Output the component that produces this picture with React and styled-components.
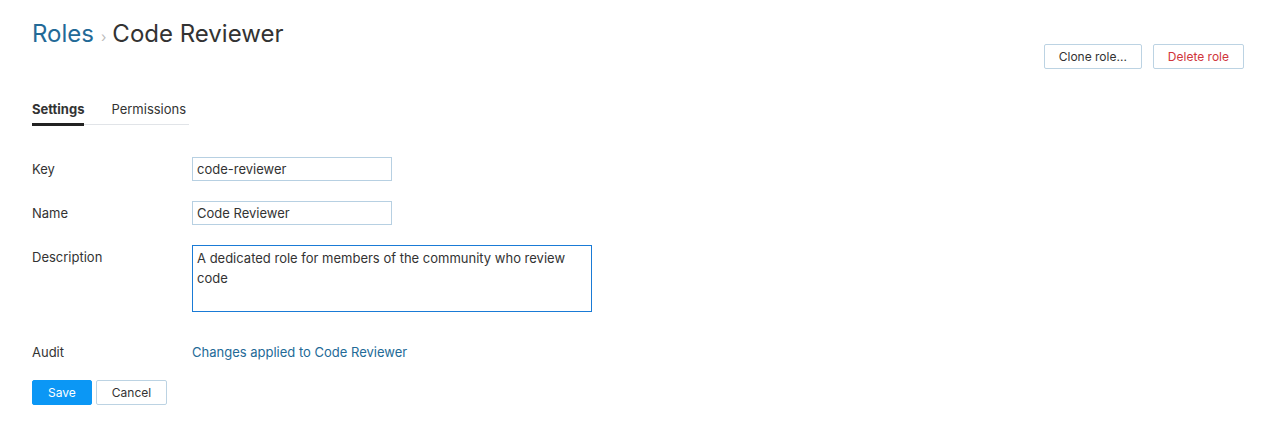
import React from "react";
import styled, { createGlobalStyle } from "styled-components";

const Global = createGlobalStyle`
  body { margin: 0; background: #fff; font-family: Inter, "Noto Sans", sans-serif; color: #333; }
`;

const Page = styled.div`
  padding: 19px 33px 0 32px;
`;

const Header = styled.div`
  display: flex;
  justify-content: space-between;
  align-items: flex-start;
`;

const Title = styled.h1`
  margin: 0;
  font-size: 24px;
  font-weight: 400;
  line-height: 30px;
  color: #333;
  display: flex;
  align-items: baseline;
`;

const Crumb = styled.a`
  color: #236a97;
  text-decoration: none;
`;

const Sep = styled.span`
  color: #bbb;
  font-size: 14px;
  margin: 0 6px 0 7px;
`;

const Actions = styled.div`
  display: flex;
  gap: 11px;
  margin-top: 25px;
`;

const Button = styled.button`
  font-family: inherit;
  font-size: 12px;
  height: 25px;
  padding: 0 ${(p) => p.$pad || 14}px;
  border-radius: 2px;
  cursor: pointer;
  background: ${(p) => (p.$primary ? "#0b97f5" : "#fff")};
  border: 1px solid ${(p) => (p.$primary ? "#0b97f5" : "#bcd3e3")};
  color: ${(p) => (p.$primary ? "#fff" : p.$danger ? "#d0353b" : "#333")};
`;

const Tabs = styled.div`
  display: inline-flex;
  margin-top: 32px;
  border-bottom: 1px solid #e1e4e8;
`;

const Tab = styled.div`
  font-size: 13px;
  font-weight: ${(p) => (p.$active ? 700 : 400)};
  color: #333;
  padding: 0 ${(p) => (p.$active ? "0" : "3px")} 6px 0;
  margin-right: ${(p) => (p.$active ? "27px" : "0")};
  border-bottom: 3px solid ${(p) => (p.$active ? "#222" : "transparent")};
  margin-bottom: -2px;
  line-height: 16px;
`;

const Form = styled.div`
  margin-top: 32px;
  display: grid;
  grid-template-columns: 160px 1fr;
  row-gap: 20px;
  align-items: start;
`;

const Label = styled.div`
  font-size: 13px;
  line-height: 24px;
  color: #333;
`;

const Input = styled.input`
  box-sizing: border-box;
  width: 200px;
  height: 24px;
  border: 1px solid #b7d0e2;
  padding: 0 4px;
  font-family: inherit;
  font-size: 13px;
  color: #333;
  outline: none;
  border-radius: 0;
`;

const Area = styled.textarea`
  box-sizing: border-box;
  width: 400px;
  height: 67px;
  border: 1px solid #1a7bd6;
  padding: 2px 4px;
  font-family: inherit;
  font-size: 13px;
  line-height: 20px;
  color: #333;
  outline: none;
  resize: none;
  border-radius: 0;
  margin-bottom: 4px;
`;

const Link = styled.a`
  font-size: 13px;
  line-height: 24px;
  color: #236a97;
  text-decoration: none;
`;

const Footer = styled.div`
  display: flex;
  gap: 4px;
  margin-top: 16px;
`;

export default function App() {
  return (
    <>
      <Global />
      <Page>
        <Header>
          <Title>
            <Crumb href="#">Roles</Crumb>
            <Sep>›</Sep>
            <span>Code Reviewer</span>
          </Title>
          <Actions>
            <Button>Clone role...</Button>
            <Button $danger>Delete role</Button>
          </Actions>
        </Header>
        <Tabs>
          <Tab $active>Settings</Tab>
          <Tab>Permissions</Tab>
        </Tabs>
        <Form>
          <Label>Key</Label>
          <div><Input defaultValue="code-reviewer" /></div>
          <Label>Name</Label>
          <div><Input defaultValue="Code Reviewer" /></div>
          <Label>Description</Label>
          <div>
            <Area defaultValue={"A dedicated role for members of the community who review code"} />
          </div>
          <Label>Audit</Label>
          <div><Link href="#">Changes applied to Code Reviewer</Link></div>
        </Form>
        <Footer>
          <Button $primary $pad={15}>Save</Button>
          <Button $pad={15}>Cancel</Button>
        </Footer>
      </Page>
    </>
  );
}
